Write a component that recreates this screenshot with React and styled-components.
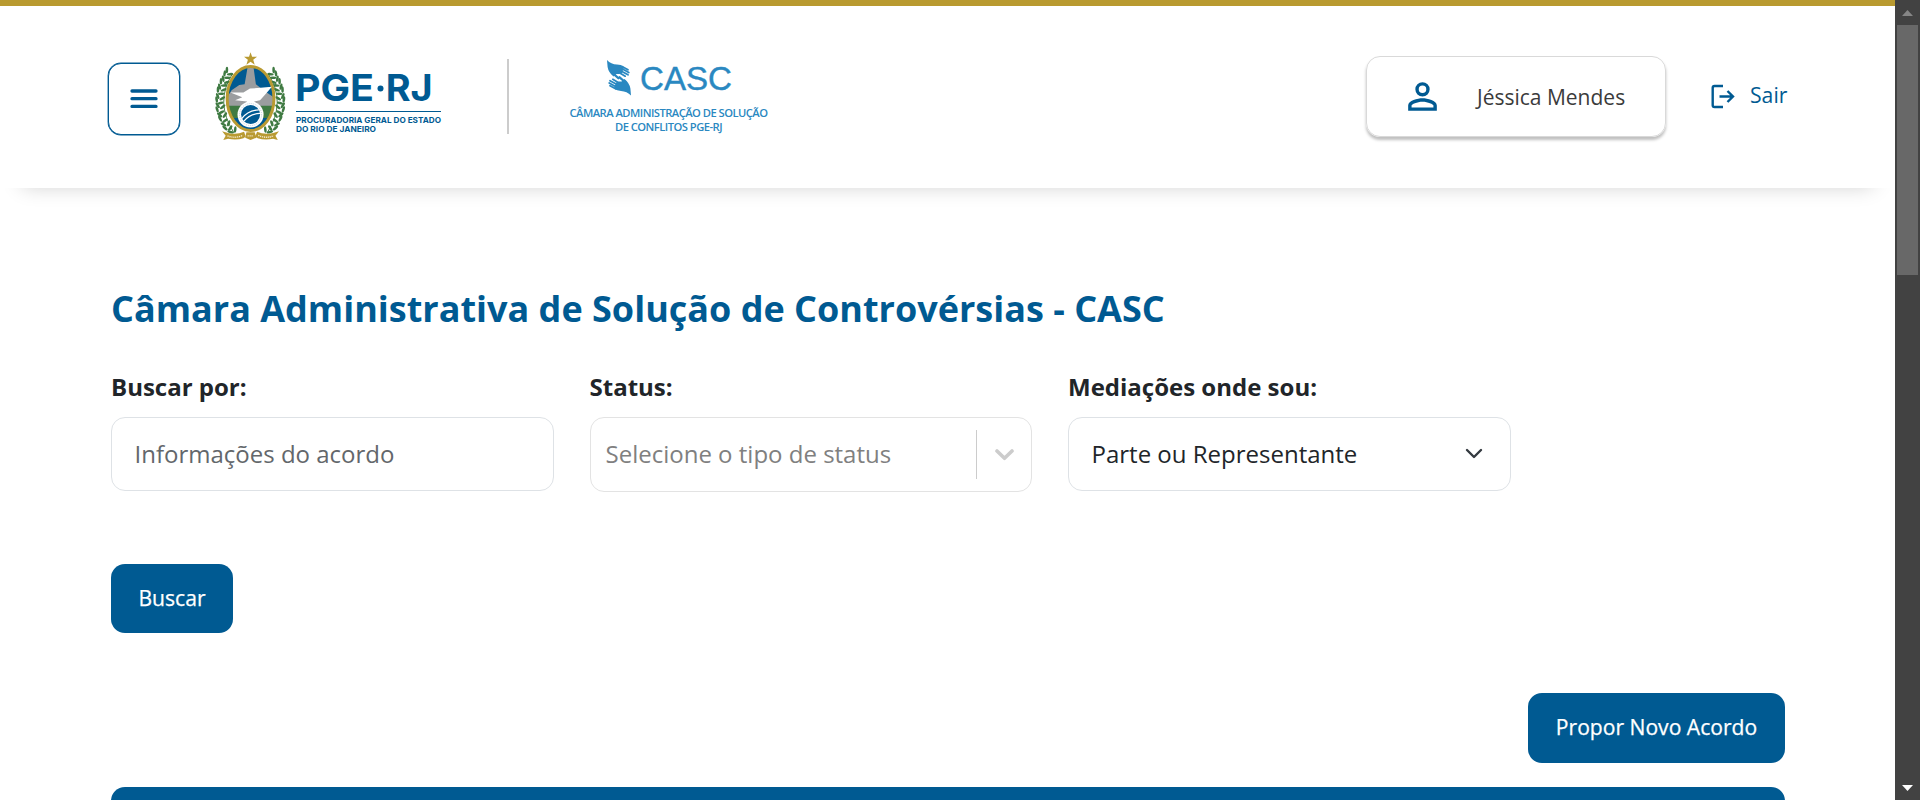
import React from "react";
import styled, { createGlobalStyle } from "styled-components";

const BLUE = "#005a92";
const SKY = "#2a88c1";
const GOLD = "#b99a32";
const GREEN = "#3f7a42";

const GlobalStyle = createGlobalStyle`
  *, *::before, *::after { box-sizing: border-box; }
  html, body { margin: 0; height: 100%; overflow: hidden; background: #fff; }
  body { font-family: "Open Sans", "Noto Sans", sans-serif; color: #212529; }
  button, input { font-family: inherit; }
  svg { display: block; flex: none; }
`;

const Shell = styled.div`
  display: flex;
  height: 800px;
  overflow: hidden;
`;

const Page = styled.div`
  flex: 1;
  min-width: 0;
  height: 800px;
  overflow: hidden;
`;

const Header = styled.header`
  display: flex;
  align-items: flex-start;
  height: 188px;
  padding: 0 108px;
  border-top: 6px solid #b99a30;
  background: #fff;
  box-shadow: 0 20px 20px -22px rgba(0, 0, 0, 0.2);
`;

const MenuButton = styled.button`
  display: grid;
  place-items: center;
  width: 72px;
  height: 72px;
  margin: 57px 35px 0 0;
  padding: 0;
  border: 1.5px solid ${BLUE};
  border-radius: 13px;
  background: #fff;
  box-shadow: 0 0 0 0.4px ${BLUE};
`;

const PgeLogo = styled.div`
  width: 230px;
  margin-top: 46px;
`;

const Divider = styled.div`
  width: 2px;
  height: 75px;
  margin: 53px 60px 0 62px;
  background: #ccc;
`;

const CascLogo = styled.div`
  margin-top: 52px;
`;

const HeaderActions = styled.div`
  display: flex;
  align-items: flex-start;
  margin: 50px 0 0 auto;
`;

const UserCard = styled.div`
  display: flex;
  align-items: center;
  width: 300px;
  height: 81px;
  padding-left: 34px;
  border: 1px solid #d9d9d9;
  border-radius: 14px;
  box-shadow: 0 3px 3px rgba(0, 0, 0, 0.25);
`;

const UserName = styled.span`
  margin-left: 33px;
  padding-top: 1px;
  font-size: 21px;
  line-height: 30px;
  color: #3b3b3b;
  white-space: nowrap;
`;

const Logout = styled.a`
  display: flex;
  align-items: center;
  width: 76px;
  margin: 27px 0 0 45px;
  font-size: 21.2px;
  line-height: 30px;
  color: ${BLUE};

  span { margin: -3px 0 0 14px; }
`;

const Main = styled.main`
  padding: 96px 110px 0 111px;
`;

const Title = styled.h1`
  margin: 0;
  font-size: 36px;
  line-height: 50px;
  font-weight: 700;
  color: ${BLUE};
  white-space: nowrap;
`;

const Filters = styled.div`
  display: grid;
  grid-template-columns: repeat(3, 442.5px);
  column-gap: 36px;
  align-items: start;
  margin-top: 35px;
`;

const Label = styled.label`
  display: block;
  height: 48px;
  font-size: 24px;
  line-height: 36px;
  font-weight: 700;
`;

const Control = styled.div`
  display: flex;
  align-items: center;
  height: ${(p) => p.$height || 74}px;
  padding-left: ${(p) => p.$inset || 22.5}px;
  border: 1px solid ${(p) => p.$line || "#dee2e6"};
  border-radius: 14px;
  font-size: 24px;
  color: ${(p) => p.$tone || "#212529"};
  background: #fff;
`;

const TextInput = styled.input`
  width: 100%;
  padding: 0 0 2px;
  border: 0;
  outline: 0;
  font-size: 24px;
  background: transparent;

  &::placeholder { color: #63676b; opacity: 1; }
`;

const Value = styled.span`
  flex: 1;
  padding-bottom: 1px;
  line-height: 34px;
  white-space: nowrap;
`;

const Separator = styled.span`
  width: 1px;
  height: 49px;
  background: #ccc;
`;

const Caret = styled.svg`
  margin: 0 ${(p) => p.$right}px 0 ${(p) => p.$left || 0}px;
`;

const Button = styled.button`
  height: ${(p) => p.$height}px;
  width: ${(p) => p.$width}px;
  padding: 0 0 3px;
  border: 0;
  border-radius: 14px;
  background: ${BLUE};
  color: #fff;
  font-size: 21.1px;
  font-weight: 500;
  -webkit-text-stroke: 0.25px #fff;
  white-space: nowrap;
`;

const SearchRow = styled.div`
  display: flex;
  margin-top: 72px;
`;

const ProposeRow = styled.div`
  display: flex;
  justify-content: flex-end;
  margin-top: 60px;
`;

const TableHead = styled.div`
  height: 80px;
  margin-top: 24px;
  border-radius: 14px 14px 0 0;
  background: ${BLUE};
`;

const Scrollbar = styled.div`
  display: flex;
  flex-direction: column;
  align-items: center;
  width: 25px;
  height: 800px;
  background: #424242;
`;

const Thumb = styled.div`
  width: 21px;
  height: 250px;
  margin-bottom: auto;
  background: #686868;
`;

const ArrowBox = styled.div`
  display: grid;
  place-items: center;
  width: 25px;
  height: 25px;
`;

const leaves = [
  [27, 25, -50], [23, 31, -45], [21, 39, -60], [17, 44, -50], [15, 52, -65], [12, 58, -50],
  [12, 67, -75], [10, 74, -60], [12, 82, -85], [11, 90, -70], [15, 97, -100], [16, 105, -80],
  [21, 112, -115], [24, 119, -100], [32, 124, -130],
];

const Leaves = () =>
  leaves.map(([x, y, a]) => (
    <g key={y} transform={`translate(${x} ${y}) rotate(${a})`} fill={GREEN}>
      <ellipse cx="2" cy="-4" rx="5.5" ry="2.2" transform="rotate(-38)" />
      <ellipse cx="1" cy="5" rx="5.5" ry="2.2" transform="rotate(45)" />
    </g>
  ));

function Crest() {
  return (
    <g transform="scale(.5926)">
      <g transform="translate(-3 5)"><Leaves /></g>
      <path d="M29 35 Q-1 82 32 134" fill="none" stroke={GREEN} strokeWidth="1.6" />
      <g transform="translate(122 5) scale(-1 1)"><Leaves /></g>
      <path d="M90 35 Q121 82 88 134" fill="none" stroke={GREEN} strokeWidth="1.6" />
      <clipPath id="shield"><ellipse cx="60" cy="76" rx="39" ry="53" /></clipPath>
      <g clipPath="url(#shield)">
        <rect x="20" y="20" width="80" height="115" fill={BLUE} />
        <path d="M18 78 L28 62 L41 53 L50 52 L55 23 L65 23 L69 52 L83 63 L102 76 V92 H18Z" fill="#9b9d9f" />
        <path d="M18 88 H102 V109 H18Z" fill={GREEN} />
      </g>
      <ellipse cx="60" cy="76" rx="39.5" ry="54" fill="none" stroke={GOLD} strokeWidth="5" />
      <path d="M26 66 L48 66 L59 59 L77 58 L96 56 L84 70 L76 79 L66 81 L75 88 L50 89 L54 81 L34 79 L46 74 Z" fill="#fff" />
      <circle cx="60" cy="103" r="22" fill="#fff" />
      <circle cx="60" cy="103" r="18.6" fill="none" stroke="#a9c3d3" strokeWidth="1.4" strokeDasharray="1.5 2" />
      <circle cx="60" cy="103" r="16" fill={BLUE} />
      <path d="M45 110 Q55 96 74 95 M48 115 Q58 102 76 101" fill="none" stroke="#fff" strokeWidth="2.2" />
      <path d="M60 -2 L62.6 5.5 H71 L64.5 10.5 L67 19 L60 14 L53 19 L55.5 10.5 L49 5.5 H57.4Z" fill={GOLD} />
      <path d="M12 131 L22 134 Q36 138 49 132 L52 140 L48 143 Q36 147 22 144 L14 146 L18 139Z" fill={GOLD} />
      <path d="M53 133 L67 133 L70 142 L60 146 L51 142Z" fill={GOLD} />
      <path d="M108 131 L98 134 Q84 138 71 132 L68 140 L72 143 Q84 147 98 144 L106 146 L102 139Z" fill={GOLD} />
      <path d="M21 139 Q35 144 47 138 M55 139 H65 M73 138 Q85 144 99 139" fill="none" stroke="#f3ead0" strokeWidth="2.4" strokeDasharray="2 1.3" />
    </g>
  );
}

/* Open hand with four fingers pointing right, wrist at the top left. */
function Hand() {
  return (
    <g fill="none" stroke={SKY} strokeLinecap="round">
      <path d="M0 0 Q4 4.3 10 4.6 Q14 4.6 17 7 L15 13 L12 14 L9.5 14 L6.5 16.5 Q1.5 12.5 .6 7Z" fill={SKY} stroke="none" />
      <path d="M15 6.4 L21 9.8 M15 8.8 L21.8 12.6 M13.5 10.8 L21 14.8 M12 12.4 L18.2 16.2" strokeWidth="1.75" />
      <path d="M6 13.5 L11.4 18.2" strokeWidth="2.3" />
    </g>
  );
}

export default function App() {
  return (
    <>
      <GlobalStyle />
      <Shell>
        <Page>
          <Header>
            <MenuButton aria-label="Menu">
              <svg width="28" height="20" viewBox="0 0 28 20" fill="none" stroke={BLUE} strokeWidth="3.3" strokeLinecap="round">
                <path d="M2 2 H26 M2 9.7 H26 M2 17.4 H26" />
              </svg>
            </MenuButton>
            <PgeLogo>
              <svg width="230" height="92" viewBox="0 0 230 92">
                <g transform="translate(0 1.5)"><Crest /></g>
                <g fill={BLUE} fontFamily="Inter, sans-serif" fontWeight="700">
                  <text x="80" y="49" fontSize="37" textLength="79" lengthAdjust="spacingAndGlyphs">PGE</text>
                  <circle cx="165.5" cy="36.5" r="3" />
                  <text x="170.7" y="49" fontSize="37" textLength="47" lengthAdjust="spacingAndGlyphs">RJ</text>
                  <rect x="81" y="59" width="145" height="1" />
                  <text x="81" y="71" fontSize="8.2" textLength="145" lengthAdjust="spacingAndGlyphs">PROCURADORIA GERAL DO ESTADO</text>
                  <text x="81" y="80" fontSize="8.2" textLength="80" lengthAdjust="spacingAndGlyphs">DO RIO DE JANEIRO</text>
                </g>
              </svg>
            </PgeLogo>
            <Divider />
            <CascLogo>
              <svg width="202" height="80" viewBox="0 0 202 80">
                <g transform="translate(38 2)">
                  <Hand />
                  <g transform="translate(24 35.5) rotate(180)"><Hand /></g>
                </g>
                <g fill={SKY} stroke={SKY}>
                  <text x="71" y="31.7" fontFamily="Liberation Sans, sans-serif" fontSize="33" strokeWidth=".4" textLength="92" lengthAdjust="spacingAndGlyphs">CASC</text>
                  <g fontFamily="Open Sans, sans-serif" fontWeight="600" fontSize="11.2" stroke="none">
                    <text x="0.5" y="58.6" textLength="198.5">CÂMARA ADMINISTRAÇÃO DE SOLUÇÃO</text>
                    <text x="46" y="72.6" textLength="107.5">DE CONFLITOS PGE-RJ</text>
                  </g>
                </g>
              </svg>
            </CascLogo>
            <HeaderActions>
              <UserCard>
                <svg width="43" height="43" viewBox="0 0 24 24" fill={BLUE}>
                  <path fillRule="evenodd" d="M12 4a4 4 0 1 0 0 8 4 4 0 0 0 0-8Zm0 1.9a2.1 2.1 0 1 1 0 4.2 2.1 2.1 0 0 1 0-4.2ZM12 13c-2.67 0-8 1.34-8 4v3h16v-3c0-2.66-5.33-4-8-4Zm0 1.9c2.97 0 6.1 1.46 6.1 2.1v1.1H5.9V17c0-.64 3.1-2.1 6.1-2.1Z" />
                </svg>
                <UserName>Jéssica Mendes</UserName>
              </UserCard>
              <Logout>
                <svg width="25" height="25" viewBox="0 0 25 24" fill="none" stroke={BLUE} strokeWidth="2.4">
                  <path d="M12 1.5 H3.5 Q1.7 1.5 1.7 3.3 V20.7 Q1.7 22.5 3.5 22.5 H12 M8.5 12 H22 M16.5 6.5 L22 12 L16.5 17.5" />
                </svg>
                <span>Sair</span>
              </Logout>
            </HeaderActions>
          </Header>
          <Main>
            <Title>Câmara Administrativa de Solução de Controvérsias - CASC</Title>
            <Filters>
              <div>
                <Label>Buscar por:</Label>
                <Control><TextInput placeholder="Informações do acordo" /></Control>
              </div>
              <div>
                <Label>Status:</Label>
                <Control $height={75} $inset={15} $line="#e3e3e3" $tone="#808080">
                  <Value>Selecione o tipo de status</Value>
                  <Separator />
                  <Caret $left={17.5} $right={17.5} width="19" height="12" viewBox="0 0 19 12" fill="none" stroke="#ccc" strokeWidth="3.6" strokeLinecap="round" strokeLinejoin="round">
                    <path d="M2 2 L9.5 9.3 L17 2" />
                  </Caret>
                </Control>
              </div>
              <div>
                <Label>Mediações onde sou:</Label>
                <Control>
                  <Value>Parte ou Representante</Value>
                  <Caret $right={27} width="18" height="12" viewBox="0 0 18 12" fill="none" stroke="#343a40" strokeWidth="2.4" strokeLinecap="round" strokeLinejoin="round">
                    <path d="M2 2 L9 9 L16 2" />
                  </Caret>
                </Control>
              </div>
            </Filters>
            <SearchRow><Button $width={122} $height={69}>Buscar</Button></SearchRow>
            <ProposeRow><Button $width={257} $height={70}>Propor Novo Acordo</Button></ProposeRow>
            <TableHead />
          </Main>
        </Page>
        <Scrollbar>
          <ArrowBox><svg width="11" height="6"><path d="M0 6 L5.5 0 L11 6Z" fill="#868686" /></svg></ArrowBox>
          <Thumb />
          <ArrowBox><svg width="11" height="6"><path d="M0 0 L5.5 6 L11 0Z" fill="#fff" /></svg></ArrowBox>
        </Scrollbar>
      </Shell>
    </>
  );
}
